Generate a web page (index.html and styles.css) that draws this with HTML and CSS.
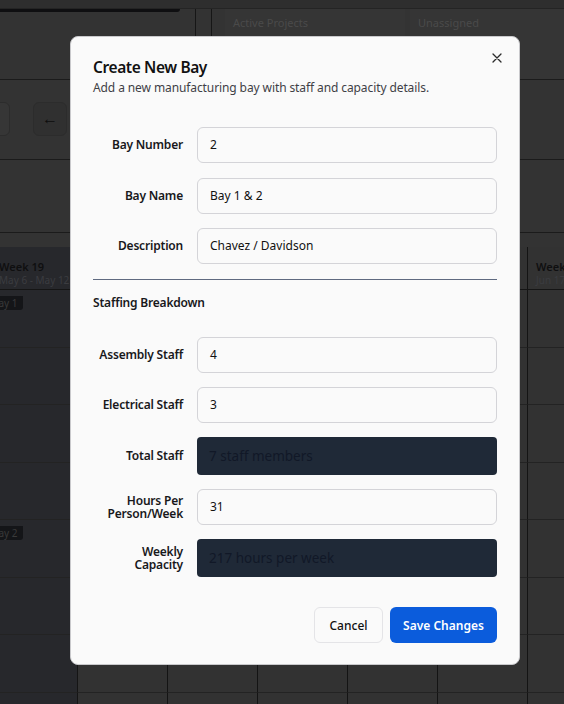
FILE: index.html
```html
<!DOCTYPE html>
<html lang="en">
<head>
<meta charset="utf-8">
<title>Create New Bay</title>
<link rel="stylesheet" href="styles.css">
</head>
<body>
<div class="page">
  <div class="topbar"></div>
  <div class="summary">
    <div class="search"><div class="search-bar"></div></div>
    <div class="divider"></div>
    <div class="divider"></div>
    <div class="stat-card"><span>Active Projects</span></div>
    <div class="stat-card"><span>Unassigned</span></div>
  </div>
  <div class="toolbar">
    <div class="tool-btn tool-btn-cut"></div>
    <div class="tool-btn">&#8592;</div>
  </div>
  <div class="band"></div>
  <div class="schedule">
    <div class="cell head current"><div class="wk">Week 19</div><div class="dates">May 6 - May 12</div></div>
    <div class="cell head"><div class="wk">Week 20</div><div class="dates">May 13 - May 19</div></div>
    <div class="cell head"><div class="wk">Week 21</div><div class="dates">May 20 - May 26</div></div>
    <div class="cell head"><div class="wk">Week 22</div><div class="dates">May 27 - Jun 2</div></div>
    <div class="cell head"><div class="wk">Week 23</div><div class="dates">Jun 3 - Jun 9</div></div>
    <div class="cell head"><div class="wk">Week 24</div><div class="dates">Jun 10 - Jun 16</div></div>
    <div class="cell head last"><div class="wk">Week 25</div><div class="dates">Jun 17 - Jun 23</div></div>

    <div class="cell current"><span class="bay-tag">Bay 1</span></div><div class="cell"></div><div class="cell"></div><div class="cell"></div><div class="cell"></div><div class="cell"></div><div class="cell last"></div>
    <div class="cell current"></div><div class="cell"></div><div class="cell"></div><div class="cell"></div><div class="cell"></div><div class="cell"></div><div class="cell last"></div>
    <div class="cell current"></div><div class="cell"></div><div class="cell"></div><div class="cell"></div><div class="cell"></div><div class="cell"></div><div class="cell last"></div>
    <div class="cell current"></div><div class="cell"></div><div class="cell"></div><div class="cell"></div><div class="cell"></div><div class="cell"></div><div class="cell last"></div>
    <div class="cell current"><span class="bay-tag">Bay 2</span></div><div class="cell"></div><div class="cell"></div><div class="cell"></div><div class="cell"></div><div class="cell"></div><div class="cell last"></div>
    <div class="cell current"></div><div class="cell"></div><div class="cell"></div><div class="cell"></div><div class="cell"></div><div class="cell"></div><div class="cell last"></div>
    <div class="cell current"></div><div class="cell"></div><div class="cell"></div><div class="cell"></div><div class="cell"></div><div class="cell"></div><div class="cell last"></div>
    <div class="cell current"></div><div class="cell"></div><div class="cell"></div><div class="cell"></div><div class="cell"></div><div class="cell"></div><div class="cell last"></div>
  </div>

  <div class="modal" role="dialog" aria-labelledby="modal-title">
    <button class="close" aria-label="Close">
      <svg width="10" height="10" viewBox="0 0 10 10"><path d="M1 1L9 9M9 1L1 9" stroke="#2b2b2b" stroke-width="1.3" fill="none" stroke-linecap="round"/></svg>
    </button>
    <h2 class="title" id="modal-title">Create New Bay</h2>
    <p class="subtitle">Add a new manufacturing bay with staff and capacity details.</p>

    <div class="form-grid first">
      <label class="label">Bay Number</label>
      <div class="input">2</div>
      <label class="label">Bay Name</label>
      <div class="input">Bay 1 &amp; 2</div>
      <label class="label">Description</label>
      <div class="input">Chavez / Davidson</div>
    </div>

    <hr class="sep">
    <h3 class="section">Staffing Breakdown</h3>

    <div class="form-grid second">
      <label class="label">Assembly Staff</label>
      <div class="input">4</div>
      <label class="label">Electrical Staff</label>
      <div class="input">3</div>
      <label class="label">Total Staff</label>
      <div class="readout">7 staff members</div>
      <label class="label">Hours Per<br>Person/Week</label>
      <div class="input">31</div>
      <label class="label">Weekly<br>Capacity</label>
      <div class="readout">217 hours per week</div>
    </div>

    <div class="actions">
      <button class="btn btn-cancel">Cancel</button>
      <button class="btn btn-save">Save Changes</button>
    </div>
  </div>
</div>
</body>
</html>
```

FILE: styles.css
```css
* { box-sizing: border-box; }
html, body { margin: 0; padding: 0; }
body {
  background: #333333;
  font-family: "Noto Sans", "Open Sans", "Liberation Sans", sans-serif;
}
.page {
  position: relative;
  width: 564px;
  height: 704px;
  overflow: hidden;
  background: #333333;
}

/* ---------- dimmed background page ---------- */
.topbar {
  height: 9px;
  background: #2e2e2e;
  border-bottom: 1px solid #242424;
}
.summary {
  display: flex;
  height: 71px;
  border-bottom: 1px solid #1b1b1b;
}
.search { width: 195px; flex-shrink: 0; }
.search-bar {
  width: 180px;
  height: 3px;
  background: #0f0f11;
  border-radius: 0 0 3px 0;
}
.divider {
  flex-shrink: 0;
  width: 1px;
  height: 70px;
  background: #161616;
  margin-right: 15px;
}
.divider + .divider { margin-right: 13px; }
.stat-card {
  flex-shrink: 0;
  width: 180px;
  margin-right: 5px;
  background: #353535;
  padding: 6px 0 0 8px;
  font-size: 11px;
  color: #4a4a4a;
}
.toolbar {
  display: flex;
  gap: 23px;
  height: 80px;
  padding-top: 22px;
  border-bottom: 1px solid #1b1b1b;
  margin-left: -24px;
}
.tool-btn {
  width: 34px;
  height: 34px;
  border: 1px solid #2c2c2c;
  border-radius: 6px;
  background: #303030;
  color: #0d0d0d;
  font-size: 16px;
  line-height: 30px;
  text-align: center;
}
.tool-btn-cut { background: #363636; }
.band {
  height: 73px;
  border-bottom: 1px solid #1b1b1b;
}
.schedule {
  margin-top: 14px;
  margin-left: -12px;
  display: grid;
  grid-template-columns: repeat(7, 90px);
  grid-template-rows: 43px repeat(8, 57.5px);
}
.cell {
  border-right: 1px solid #141414;
  border-bottom: 1px solid #232323;
  background: #323232;
}
.cell.current { background: #27282c; border-right-color: #151515; }
.cell.last { border-right: none; padding-left: 8px; }
.head {
  padding: 13px 0 0 8px;
  border-bottom: 1px solid #151515;
}
.head.current { padding-left: 11px; }
.head:first-child { border-right: none; }
.wk {
  font-size: 11px;
  font-weight: 600;
  color: #0f0f10;
  line-height: 14px;
  white-space: nowrap;
}
.dates {
  font-size: 10px;
  color: #3b3c40;
  line-height: 13px;
  white-space: nowrap;
}
.bay-tag {
  display: inline-block;
  padding: 0 5px 0 4px;
  height: 14px;
  line-height: 14px;
  font-size: 10px;
  color: #3a3a3a;
  background: #141518;
  border-radius: 0 0 3px 0;
}

/* ---------- modal ---------- */
.modal {
  position: absolute;
  left: 70px;
  top: 36px;
  width: 450px;
  padding: 20px 22px 21px 22px;
  background: #fafafa;
  border: 1px solid #c9c9cc;
  border-radius: 8px;
  color: #111111;
}
.close {
  position: absolute;
  right: 16px;
  top: 15px;
  width: 12px;
  height: 12px;
  padding: 1px;
  border: none;
  background: transparent;
  display: flex;
  align-items: center;
  justify-content: center;
}
.title {
  margin: 0;
  font-size: 15.5px;
  font-weight: 600;
  line-height: 20px;
  color: #111;
  letter-spacing: -0.4px;
}
.subtitle {
  margin: 3px 0 0 0;
  font-size: 12px;
  line-height: 16px;
  letter-spacing: -0.1px;
  color: #3f3f46;
}
.form-grid {
  display: grid;
  grid-template-columns: 90px 1fr;
  column-gap: 14px;
  row-gap: 14.5px;
  align-items: center;
}
.form-grid.first { margin-top: 31px; }
.form-grid.second { row-gap: 14px; }
.label {
  text-align: right;
  font-size: 12px;
  font-weight: 600;
  line-height: 13.5px;
  letter-spacing: -0.2px;
  color: #18181b;
}
.input {
  height: 36px;
  border: 1px solid #d4d4d8;
  border-radius: 6px;
  background: #fafafa;
  padding: 0 12px;
  font-size: 12px;
  line-height: 34px;
  color: #111;
}
.readout {
  height: 38px;
  border-radius: 4px;
  background: #1f2937;
  padding: 0 12px;
  font-size: 13.5px;
  line-height: 38px;
  color: #111827;
}
.sep {
  margin: 14.5px 0 0 0;
  border: none;
  border-top: 1px solid #5f6a80;
  height: 0;
}
.section {
  margin: 13.5px 0 24px 0;
  font-size: 12px;
  font-weight: 600;
  line-height: 20px;
  letter-spacing: -0.2px;
  color: #18181b;
}
.actions {
  display: flex;
  justify-content: flex-end;
  gap: 7px;
  margin-top: 30px;
}
.btn {
  height: 36px;
  border-radius: 6px;
  font-family: inherit;
  font-size: 12px;
  font-weight: 600;
  padding: 0;
  white-space: nowrap;
  cursor: pointer;
}
.btn-cancel {
  width: 69px;
  background: #fafafa;
  border: 1px solid #e4e4e7;
  color: #111;
  font-weight: 500;
}
.btn-save {
  width: 107px;
  background: #0b5cdc;
  border: none;
  color: #ffffff;
}
```
